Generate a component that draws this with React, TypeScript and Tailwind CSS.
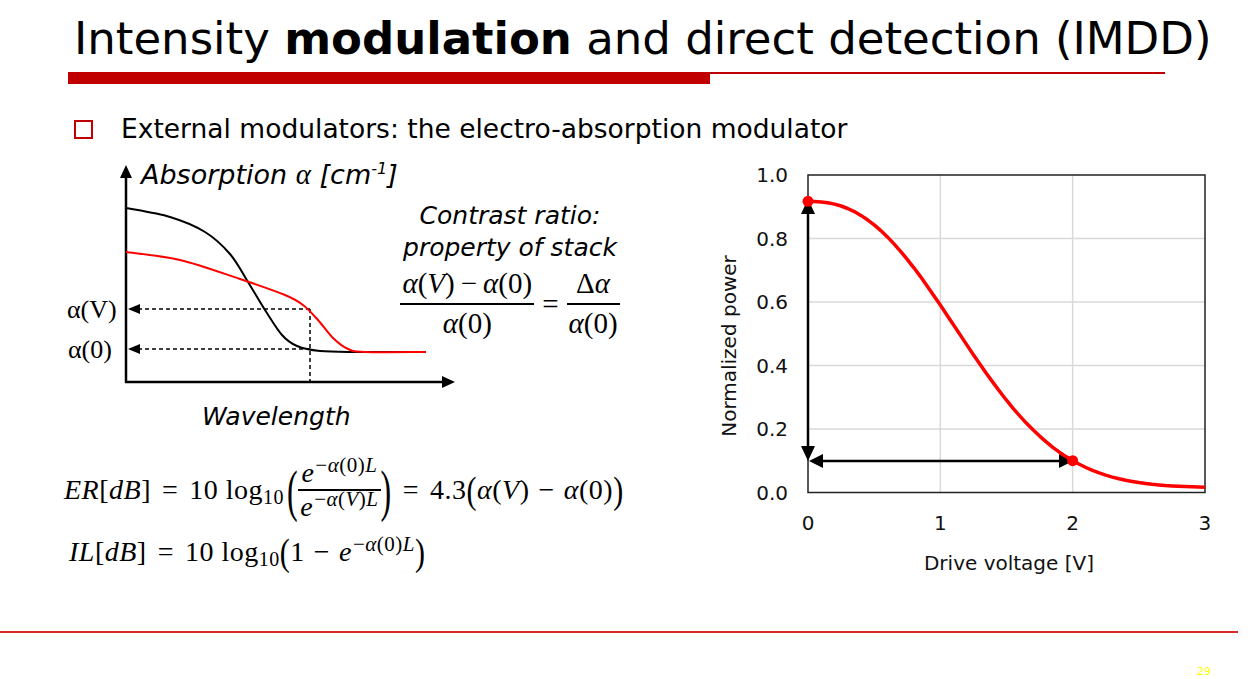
import React from 'react';

type Pt = [number, number];

// catmull-rom through the points, as cubic beziers
const smooth = (pts: Pt[]) => {
  let d = `M${pts[0][0].toFixed(1)},${pts[0][1].toFixed(1)}`;
  for (let i = 0; i < pts.length - 1; i++) {
    const p0 = pts[i - 1] || pts[i];
    const p1 = pts[i];
    const p2 = pts[i + 1];
    const p3 = pts[i + 2] || p2;
    const c1 = [p1[0] + (p2[0] - p0[0]) / 6, p1[1] + (p2[1] - p0[1]) / 6];
    const c2 = [p2[0] - (p3[0] - p1[0]) / 6, p2[1] - (p3[1] - p1[1]) / 6];
    d += ` C${c1[0].toFixed(1)},${c1[1].toFixed(1)} ${c2[0].toFixed(1)},${c2[1].toFixed(1)} ${p2[0].toFixed(1)},${p2[1].toFixed(1)}`;
  }
  return d;
};

const cx = (v: number) => 808 + v * 132.33;
const cy = (p: number) => 492.5 - p * 317.5;

// normalized transmitted power vs drive voltage
const transfer = (v: number) => 0.902 * Math.exp(-Math.pow(v / 1.397, 2.39)) + 0.015;

const powerPath = Array.from({ length: 61 }, (_, i) => {
  const v = (i / 60) * 3;
  return `${i === 0 ? 'M' : 'L'}${cx(v).toFixed(1)},${cy(transfer(v)).toFixed(1)}`;
}).join(' ');

const blackCurve: Pt[] = [
  [126, 208], [170, 217], [205, 232], [230, 254], [248, 282], [265, 310],
  [282, 335], [297, 346], [320, 351], [360, 352], [426, 352],
];

const redCurve: Pt[] = [
  [126, 252], [180, 260], [240, 279], [285, 295], [303, 305], [318, 320],
  [333, 338], [348, 349], [365, 352], [426, 352],
];

const Frac = ({ num, den, lead = 'leading-[1.3]' }: { num: React.ReactNode; den: React.ReactNode; lead?: string }) => (
  <span className="inline-flex flex-col items-center align-middle">
    <span className={`px-[2px] ${lead}`}>{num}</span>
    <span className="h-[2px] w-full bg-black" />
    <span className={`px-[2px] ${lead}`}>{den}</span>
  </span>
);

const Minus = ({ gap = 'mx-[6px]' }: { gap?: string }) => <span className={gap}>−</span>;

const AbsorptionDiagram = () => (
  <svg width="400" height="285" viewBox="60 150 400 285" className="shrink-0">
    {/* axes */}
    <line x1="126" y1="383" x2="126" y2="176" stroke="black" strokeWidth="2.5" />
    <polygon points="126,165 120,178 132,178" fill="black" />
    <line x1="125" y1="382" x2="443" y2="382" stroke="black" strokeWidth="2.5" />
    <polygon points="455,382 442,376 442,388" fill="black" />

    {/* dashed guides */}
    <g stroke="black" strokeWidth="1.5" strokeDasharray="4 3" fill="none">
      <line x1="138" y1="309" x2="310" y2="309" />
      <line x1="138" y1="349" x2="310" y2="349" />
      <line x1="310" y1="309" x2="310" y2="382" />
    </g>
    <polygon points="128,309 140,304 140,314" fill="black" />
    <polygon points="128,349 140,344 140,354" fill="black" />

    <path d={smooth(blackCurve)} fill="none" stroke="black" strokeWidth="2" />
    <path d={smooth(redCurve)} fill="none" stroke="#ff0000" strokeWidth="2" />

    <g className="font-['Liberation_Serif',serif]" fontSize="26">
      <text x="67" y="318">α(V)</text>
      <text x="68" y="358">α(0)</text>
    </g>
    <text x="141" y="184" fontSize="27" fontStyle="italic">
      Absorption <tspan className="font-['Liberation_Serif',serif]" fontSize="29">α</tspan> [cm
      <tspan fontSize="16" dy="-10">-1</tspan>
      <tspan dy="10">]</tspan>
    </text>
    <text x="202" y="425" fontSize="25" fontStyle="italic">Wavelength</text>
  </svg>
);

const ContrastRatio = () => (
  <div className="-ml-[65px] mt-[50px] flex w-[230px] shrink-0 flex-col items-center italic text-[25px] leading-[32px]">
    <div>Contrast ratio:</div>
    <div>property of stack</div>
    <div className="mt-[1px] flex items-center not-italic font-['Liberation_Serif',serif] text-[29px]">
      <Frac num={<><i>α</i>(<i>V</i>)<Minus /><i>α</i>(0)</>} den={<><i>α</i>(0)</>} />
      <span className="mx-[8px]">=</span>
      <Frac num={<>Δ<i>α</i></>} den={<><i>α</i>(0)</>} />
    </div>
  </div>
);

const Sup = ({ children }: { children: React.ReactNode }) => (
  <sup className="ml-[1px] text-[21px]">{children}</sup>
);

const Equations = () => (
  <div className="mt-[22px] flex flex-col font-['Liberation_Serif',serif] text-[28px] tracking-[0.5px] text-black">
    <div className="ml-[4px] flex items-center">
      <span><i>ER</i>[<i>dB</i>]</span>
      <span className="mx-[11px]">=</span>
      <span>10 log<sub className="text-[20px]">10</sub></span>
      <span className="ml-[3px] inline-block scale-y-[1.8] text-[32px] leading-none">(</span>
      <Frac
        lead="leading-[1.15]"
        num={<><i>e</i><Sup>−<i>α</i>(0)<i>L</i></Sup></>}
        den={<><i>e</i><Sup>−<i>α</i>(<i>V</i>)<i>L</i></Sup></>}
      />
      <span className="inline-block scale-y-[1.8] text-[32px] leading-none">)</span>
      <span className="mx-[11px]">=</span>
      <span>4.3</span>
      <span className="inline-block scale-y-[1.25] text-[30px] leading-none">(</span>
      <span><i>α</i>(<i>V</i>)<Minus gap="mx-[9px]" /><i>α</i>(0)</span>
      <span className="inline-block scale-y-[1.25] text-[30px] leading-none">)</span>
    </div>
    <div className="mt-[8px] ml-[9px] flex items-center">
      <span><i>IL</i>[<i>dB</i>]</span>
      <span className="mx-[11px]">=</span>
      <span>10 log<sub className="text-[20px]">10</sub></span>
      <span className="inline-block scale-y-[1.25] text-[30px] leading-none">(</span>
      <span>1<Minus gap="mx-[9px]" /><i>e</i><Sup>−<i>α</i>(0)<i>L</i></Sup></span>
      <span className="inline-block scale-y-[1.25] text-[30px] leading-none">)</span>
    </div>
  </div>
);

const PowerChart = () => (
  <svg width="530" height="430" viewBox="700 150 530 430" className="shrink-0">
    {/* grid */}
    <g stroke="#d9d9d9" strokeWidth="1.5">
      {[1, 2].map((v) => (
        <line key={v} x1={cx(v)} y1="175" x2={cx(v)} y2="492.5" />
      ))}
      {[0.2, 0.4, 0.6, 0.8].map((p) => (
        <line key={p} x1="808" y1={cy(p)} x2="1205" y2={cy(p)} />
      ))}
    </g>
    <rect x="808" y="175" width="397" height="317.5" fill="none" stroke="#222" strokeWidth="1.5" />

    {/* ER / voltage arrows */}
    <line x1="808" y1="212" x2="808" y2="449" stroke="black" strokeWidth="2.5" />
    <polygon points="808,199 801,214 815,214" fill="black" />
    <polygon points="808,461 801,446 815,446" fill="black" />
    <line x1="820" y1="461" x2="1060" y2="461" stroke="black" strokeWidth="2.5" />
    <polygon points="809,461 823,454 823,468" fill="black" />
    <polygon points="1073,461 1059,454 1059,468" fill="black" />

    <path d={powerPath} fill="none" stroke="#ff0000" strokeWidth="3.5" strokeLinejoin="round" />
    <circle cx="808" cy={cy(transfer(0))} r="5.5" fill="#ff0000" />
    <circle cx={cx(2)} cy={cy(transfer(2))} r="5.5" fill="#ff0000" />

    <g fontSize="20" fill="#111">
      {['0.0', '0.2', '0.4', '0.6', '0.8', '1.0'].map((t, i) => (
        <text key={t} x="788" y={cy(i * 0.2) + 7} textAnchor="end">{t}</text>
      ))}
      {[0, 1, 2, 3].map((v) => (
        <text key={v} x={cx(v)} y="530" textAnchor="middle">{v}</text>
      ))}
      <text x="1009" y="570" textAnchor="middle">Drive voltage [V]</text>
      <text x="736" y="346" textAnchor="middle" transform="rotate(-90 736 346)">Normalized power</text>
    </g>
  </svg>
);

export default function App() {
  return (
    <div className="flex h-[679px] w-[1255px] flex-col overflow-hidden bg-white text-black font-['DejaVu_Sans',sans-serif]">
      <h1 className="h-[72px] whitespace-nowrap pl-[74px] pt-[16px] text-[45px] leading-none font-normal">
        Intensity <b>modulation</b> and direct detection (IMDD)
      </h1>
      <div className="ml-[68px] flex items-start">
        <div className="h-[12px] w-[642px] bg-[#c00000]" />
        <div className="h-[2px] w-[455px] bg-[#c00000]" />
      </div>

      <div className="mt-[36px] flex h-[19px] items-center pl-[74px]">
        <span className="h-[19px] w-[19px] shrink-0 border-2 border-[#c00000]" />
        <span className="ml-[28px] whitespace-nowrap text-[26.5px] leading-none">
          External modulators: the electro-absorption modulator
        </span>
      </div>

      <div className="mt-[11px] flex">
        <div className="flex w-[640px] shrink-0 flex-col pl-[60px]">
          <div className="flex">
            <AbsorptionDiagram />
            <ContrastRatio />
          </div>
          <Equations />
        </div>
        <div className="ml-[60px]">
          <PowerChart />
        </div>
      </div>

      <div className="mt-auto">
        <div className="h-[2px] w-[1238px] bg-[#d42a2a]" />
        <div className="h-[46px] pl-[1197px] pt-[33px] text-[11px] leading-none text-[#ffff00]">29</div>
      </div>
    </div>
  );
}
